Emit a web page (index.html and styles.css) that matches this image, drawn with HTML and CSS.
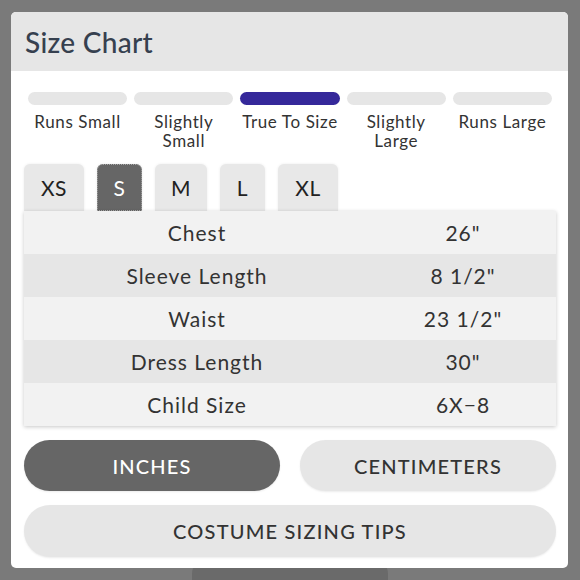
FILE: index.html
```html
<!DOCTYPE html>
<html>
<head>
<meta charset="utf-8">
<link rel="stylesheet" href="styles.css">
</head>
<body>
<div class="behind"></div>
<div class="modal">
  <div class="header"><h1 class="title">Size Chart</h1></div>
  <div class="content">
    <div class="scale">
      <div class="step"><div class="bar"></div><div class="label">Runs Small</div></div>
      <div class="step"><div class="bar"></div><div class="label">Slightly<br>Small</div></div>
      <div class="step"><div class="bar active"></div><div class="label">True To Size</div></div>
      <div class="step"><div class="bar"></div><div class="label">Slightly<br>Large</div></div>
      <div class="step"><div class="bar"></div><div class="label">Runs Large</div></div>
    </div>
    <div class="tabs">
      <div class="tab tab-wide">XS</div>
      <div class="tab tab-sel">S</div>
      <div class="tab">M</div>
      <div class="tab">L</div>
      <div class="tab tab-wide">XL</div>
    </div>
    <div class="table">
      <div class="row"><div class="cell name">Chest</div><div class="cell val">26"</div></div>
      <div class="row alt"><div class="cell name">Sleeve Length</div><div class="cell val">8 1/2"</div></div>
      <div class="row"><div class="cell name">Waist</div><div class="cell val">23 1/2"</div></div>
      <div class="row alt"><div class="cell name">Dress Length</div><div class="cell val">30"</div></div>
      <div class="row"><div class="cell name">Child Size</div><div class="cell val">6X&minus;8</div></div>
    </div>
    <div class="units">
      <div class="btn btn-dark">INCHES</div>
      <div class="btn">CENTIMETERS</div>
    </div>
    <div class="btn btn-full">COSTUME SIZING TIPS</div>
  </div>
</div>
</body>
</html>
```
FILE: styles.css
```css
html, body {
  margin: 0;
  padding: 0;
}
body {
  width: 580px;
  height: 580px;
  background: #7a7a7a;
  font-family: "Lato", "Open Sans", sans-serif;
  color: #333;
  overflow: hidden;
  position: relative;
}
.behind {
  position: absolute;
  left: 192px;
  top: 560px;
  width: 196px;
  height: 40px;
  border-radius: 14px;
  background: #6a6a6a;
}
.modal {
  position: relative;
  margin: 12px 0 0 11px;
  width: 557px;
  height: 556px;
  background: #fff;
  border-radius: 5px;
  overflow: hidden;
}
.header {
  height: 59px;
  background: #e6e6e6;
  display: flex;
  align-items: center;
  padding-left: 14px;
}
.title {
  margin: 0;
  font-size: 28px;
  font-weight: 500;
  color: #36404f;
  letter-spacing: 0.3px;
}
.content {
  padding: 21px 12px 0 13px;
}
.scale {
  display: grid;
  grid-template-columns: repeat(5, 1fr);
  column-gap: 7px;
  padding: 0 4px 0 4px;
}
.bar {
  height: 13px;
  border-radius: 7px;
  background: #e6e6e6;
}
.bar.active {
  background: #35289a;
}
.label {
  margin-top: 7px;
  text-align: center;
  font-size: 17px;
  line-height: 19px;
  letter-spacing: 0.6px;
  color: #333;
}
.tabs {
  display: flex;
  gap: 13px;
  margin-top: 14px;
  height: 47px;
}
.tab {
  padding: 0 16px;
  min-width: 13px;
  display: flex;
  align-items: center;
  justify-content: center;
  background: #e8e8e8;
  border-radius: 6px 6px 0 0;
  font-size: 21px;
  letter-spacing: 0.5px;
  color: #222;
  box-shadow: 0 0 3px rgba(0,0,0,0.08);
}
.tab-wide {
  width: 28px;
}
.tab-sel {
  background: #666;
  color: #fff;
  outline: 1px dotted #aaa;
  outline-offset: -1px;
}
.table {
  position: relative;
  box-shadow: 0 1px 4px rgba(0,0,0,0.22);
}
.row {
  display: grid;
  grid-template-columns: 346px 1fr;
  height: 43px;
  align-items: center;
  background: #f2f2f2;
}
.row.alt {
  background: #e6e6e6;
}
.cell {
  text-align: center;
  font-size: 21px;
  letter-spacing: 1px;
  color: #333;
}
.units {
  display: grid;
  grid-template-columns: 1fr 1fr;
  column-gap: 20px;
  margin-top: 14px;
}
.btn {
  height: 51px;
  border-radius: 26px;
  background: #e6e6e6;
  color: #333;
  display: flex;
  align-items: center;
  justify-content: center;
  font-size: 20px;
  font-weight: 500;
  letter-spacing: 1.2px;
  box-shadow: 0 1px 2px rgba(0,0,0,0.08);
}
.btn-dark {
  background: #666;
  color: #fff;
}
.btn-full {
  margin-top: 14px;
  height: 52px;
}
```
